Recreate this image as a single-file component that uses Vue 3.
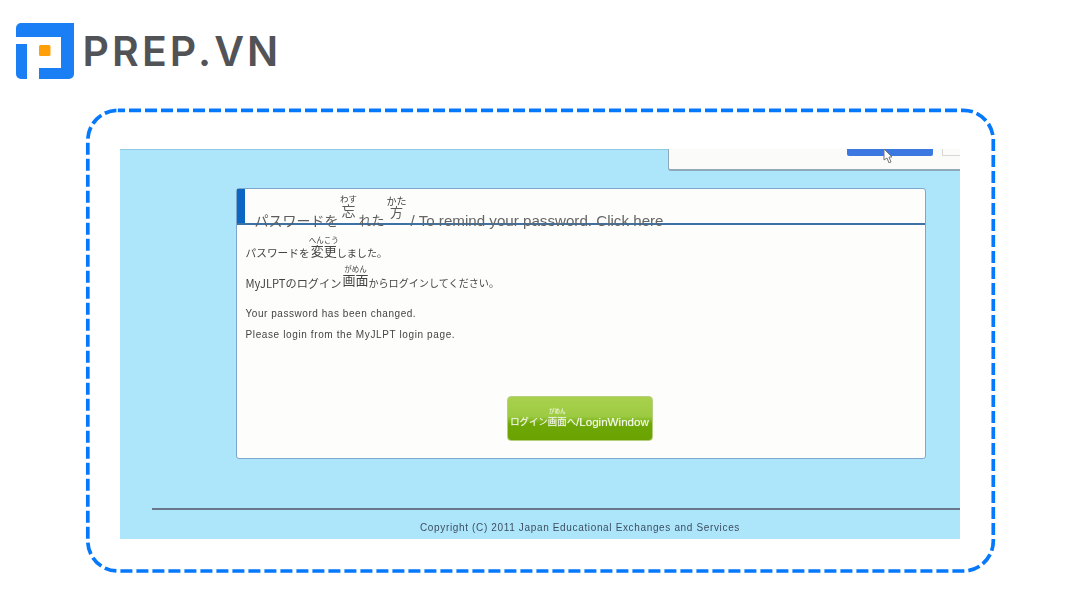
<script setup>
const lines = {
  title: 'パスワードを',
  hint: '/ To remind your password. Click here'
}
</script>

<template>
  <div class="page">
    <header class="brand">
      <svg class="mark" width="58" height="56" viewBox="0 0 58 56" aria-hidden="true">
        <path fill="#1a7ff5" d="M5 0H58V51a5 5 0 0 1-5 5H23V45H45V14H0V5a5 5 0 0 1 5-5Z" />
        <path fill="#1a7ff5" d="M0 21H11V56H5a5 5 0 0 1-5-5Z" />
        <rect x="23" y="22" width="11.5" height="11" rx="1.5" fill="#ff9f0a" />
      </svg>
      <span class="wordmark">PREP.VN</span>
    </header>

    <section class="frame">
      <svg class="dash" width="908" height="462" aria-hidden="true">
        <rect x="1.8" y="0.3" width="905.5" height="460.7" rx="30" fill="none" stroke="#0578fb" stroke-width="3.7" stroke-dasharray="12 4" stroke-dashoffset="4.8" />
      </svg>
      <div class="shot">
        <div class="topbar">
          <div class="panel">
            <span class="blue"></span>
            <svg class="cursor" width="12" height="14" viewBox="0 0 12 14" aria-hidden="true">
              <path d="M1 0 9 8H6l2 5-2 1-2-5-3 2Z" fill="#fff" stroke="#777" stroke-width="1" />
            </svg>
            <span class="ghost"></span>
          </div>
        </div>

        <div class="card">
          <div class="card-head">
            <span class="accent"></span>
            <div class="title">
              <span class="t-text">{{ lines.title }}</span>
              <span class="stack wasu"><span class="rt">わす</span><span class="kan">忘</span></span>
              <span class="t-text okuri">れた</span>
              <span class="stack kata"><span class="rt">かた</span><span class="kan">方</span></span>
              <span class="en">{{ lines.hint }}</span>
            </div>
          </div>
          <div class="card-body">
            <div class="row r1">
              <span>パスワードを</span>
              <span class="stack henkou"><span class="rt">へんこう</span><span class="kan">変更</span></span>
              <span class="tail1">しました。</span>
            </div>
            <div class="row r2">
              <span class="my">MyJLPTのログイン</span>
              <span class="stack gamen"><span class="rt">がめん</span><span class="kan">画面</span></span>
              <span class="tail2">からログインしてください。</span>
            </div>
            <p class="en-line one">Your password has been changed.</p>
            <p class="en-line two">Please login from the MyJLPT login page.</p>
            <div class="actions">
              <button class="login" type="button">
                <span class="b-ja">ログイン</span>
                <span class="stack b-kan"><span class="rt">がめん</span><span class="kan">画面</span></span>
                <span class="b-ja">へ</span>
                <span class="b-en">/LoginWindow</span>
              </button>
            </div>
          </div>
        </div>

        <footer class="foot">
          <div class="rule"></div>
          <p class="copy">Copyright (C) 2011 Japan Educational Exchanges and Services</p>
        </footer>
      </div>
    </section>
  </div>
</template>

<style>
html, body { margin: 0; background: #fff; }
</style>

<style scoped>
.page {
  width: 1080px;
  height: 603px;
  overflow: hidden;
  background: #fff;
  font-family: "Noto Sans CJK JP", "Liberation Sans", sans-serif;
}
.brand {
  height: 110px;
  box-sizing: border-box;
  padding: 23px 0 0 15.5px;
  display: flex;
  align-items: flex-start;
  gap: 9px;
}
.wordmark {
  font-family: Inter, "Liberation Sans", sans-serif;
  font-weight: 600;
  font-size: 41px;
  line-height: 56px;
  letter-spacing: 3.1px;
  color: #515356;
}
.frame {
  position: relative;
  width: 908px;
  height: 462px;
  margin-left: 86px;
  box-sizing: border-box;
  padding: 39px 0 0 34px;
}
.dash { position: absolute; left: 0; top: 0; overflow: visible; }
.shot {
  width: 840px;
  height: 390px;
  background: #ade6fb;
  display: flex;
  flex-direction: column;
  overflow: hidden;
  box-shadow: inset 0 1px 0 #8fc8e2;
}
.topbar {
  height: 22px;
  display: flex;
  justify-content: flex-end;
  flex: none;
}
.panel {
  position: relative;
  width: 292px;
  height: 22px;
  box-sizing: border-box;
  background: #fbfbf9;
  border-left: 1px solid #8fa9bb;
  border-bottom: 2px solid #8fa9bb;
  border-bottom-left-radius: 3px;
  display: flex;
  align-items: flex-start;
  padding-left: 178px;
}
.blue {
  width: 86px;
  height: 7px;
  background: #3b78e0;
  border-radius: 0 0 2px 2px;
}
.cursor { position: absolute; left: 214px; top: 0; }
.ghost {
  width: 18px;
  height: 7px;
  margin-left: 9px;
  border: 1px solid #d7d7d3;
  border-top: 0;
  border-right: 0;
  box-sizing: border-box;
}
.card {
  flex: none;
  width: 690px;
  height: 271px;
  margin: 17px 0 0 116px;
  box-sizing: border-box;
  background: #fdfdfc;
  border: 1.5px solid #7ca6cc;
  border-radius: 3px;
  display: flex;
  flex-direction: column;
}
.card-head {
  flex: none;
  height: 36px;
  display: flex;
  box-sizing: border-box;
  border-bottom: 2px solid #3d72a6;
}
.accent {
  width: 8px;
  background: #0d66c2;
  flex: none;
}
.stack {
  display: flex;
  flex-direction: column;
  align-items: center;
  flex: none;
  white-space: nowrap;
}
.title {
  flex: 1;
  display: flex;
  align-items: flex-end;
  padding-left: 9.5px;
  font-size: 14px;
  line-height: 16px;
  color: #5c5c5c;
  white-space: nowrap;
  filter: blur(0.35px);
}
.title > span { margin-bottom: -5px; }
.title .rt { font-size: 8.5px; line-height: 9px; color: #444; }
.title .kan { line-height: 14px; }
.title > .wasu { width: 14px; margin: 0 3px 6px 3px; }
.title > .okuri { font-size: 13px; }
.title > .kata { width: 14px; margin: 0 7px 5px 5px; }
.kata .rt { font-size: 10px; line-height: 10px; }
.kata .kan { font-size: 13px; line-height: 12px; }
.title > .en {
  font-family: "Liberation Sans", sans-serif;
  font-size: 15.15px;
  color: #666;
  margin-bottom: -6px;
}
.card-body {
  flex: 1;
  padding-left: 8.5px;
  color: #444;
}
.card-body p { margin: 0; white-space: nowrap; filter: blur(0.3px); }
.row {
  display: flex;
  align-items: flex-end;
  font-size: 10.7px;
  line-height: 16px;
  white-space: nowrap;
  filter: blur(0.3px);
}
.r1 { height: 36px; }
.r2 { height: 30px; }
.row .rt { font-size: 7.5px; line-height: 8px; }
.row .kan { font-size: 13px; line-height: 14px; }
.henkou { width: 26px; margin: 0 0 3px 1px; }
.gamen { width: 26px; margin: 0 0 4px 1px; }
.tail1 { font-size: 10.1px; }
.my { font-size: 11.2px; }
.tail2 { font-size: 10.1px; }
.en-line {
  font-family: "Liberation Sans", sans-serif;
  font-size: 10px;
  line-height: 14px;
  letter-spacing: 0.55px;
}
.one { margin-top: 16px !important; }
.two { margin-top: 7px !important; letter-spacing: 0.62px; }
.actions {
  display: flex;
  margin: 54px 0 0 261px;
}
.login {
  width: 146px;
  height: 45px;
  padding: 0 0 12px;
  border: 1px solid #b4cf7e;
  border-radius: 4px;
  background: linear-gradient(#a9d14d 0%, #9ccb42 45%, #6ea806 62%, #6aa301 100%);
  color: #f2f7e4;
  display: flex;
  align-items: flex-end;
  justify-content: center;
  font-family: "Noto Sans CJK JP", "Liberation Sans", sans-serif;
  font-size: 9.4px;
  line-height: 13px;
  white-space: nowrap;
  text-shadow: 0 0 1px rgba(255, 255, 255, 0.65);
  filter: blur(0.4px);
}
.login .rt { font-size: 5.5px; line-height: 7px; color: #e8f2cc; }
.login .kan { font-size: 9.4px; line-height: 13px; }
.b-kan { width: 19px; }
.b-en { font-family: "Liberation Sans", sans-serif; font-size: 11.6px; }
.foot {
  margin: 49px 0 0 32px;
  flex: none;
}
.rule {
  height: 2px;
  background: #68788a;
}
.copy {
  margin: 11px 0 0 268px;
  font-family: "Liberation Sans", sans-serif;
  font-size: 10px;
  line-height: 14px;
  letter-spacing: 0.65px;
  white-space: nowrap;
  color: #3d4e60;
  filter: blur(0.3px);
}
</style>
